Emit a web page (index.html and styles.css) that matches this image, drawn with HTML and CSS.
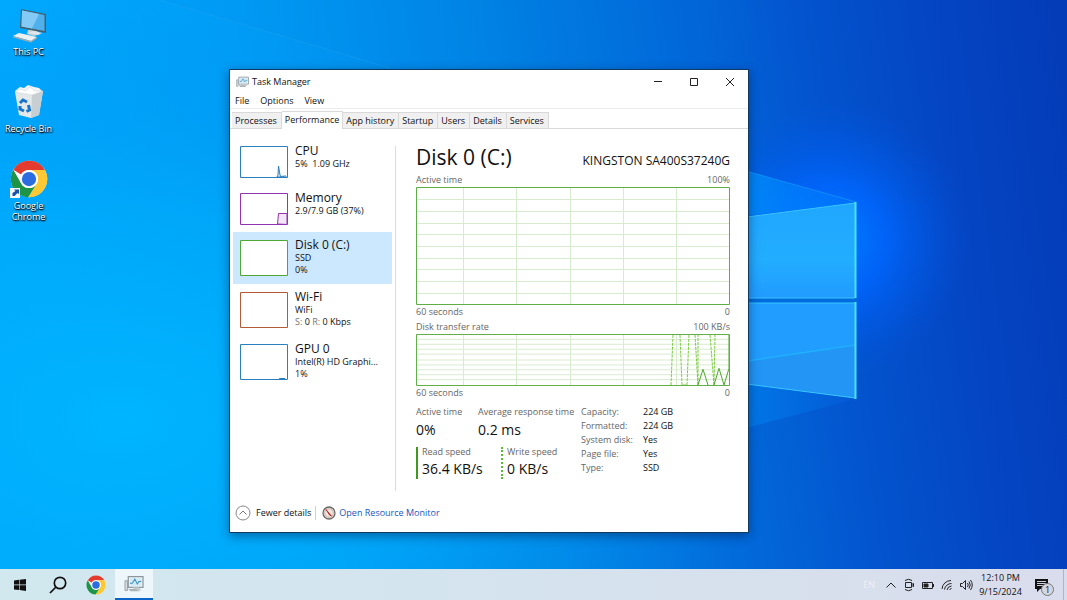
FILE: index.html
```html
<!DOCTYPE html>
<html lang="en">
<head>
<meta charset="utf-8">
<meta name="viewport" content="width=device-width, initial-scale=1">
<title>Task Manager</title>
<link rel="stylesheet" href="styles.css">
</head>
<body>
<svg class="defs" aria-hidden="true">
  <symbol id="chrome" viewBox="0 0 48 48">
    <circle cx="24" cy="24" r="23" fill="#fff"/>
    <path d="M24 1A23 23 0 0 1 44 12.600H24A11.400 11.400 0 0 0 14 18.300L4.200 12.300A23 23 0 0 1 24 1z" fill="#e33b2e"/>
    <path d="M44 12.600A23 23 0 0 1 23 47L33.900 29.700A11.400 11.400 0 0 0 24 12.600z" fill="#fcc934"/>
    <path d="M4.200 12.300L14.100 29.700A11.400 11.400 0 0 0 33.900 29.700L23 47A23 23 0 0 1 4.200 12.300z" fill="#1e9447"/>
    <circle cx="24" cy="24" r="11.500" fill="#fff"/>
    <circle cx="24" cy="24" r="9" fill="#2b6de0"/>
  </symbol>
  <symbol id="taskmgr" viewBox="0 0 24 22">
    <path d="M1 7h3v12H1z" fill="#d8dde0" stroke="#8d979c"/>
    <path d="M5 2h18v13H5z" fill="#e9f4fa" stroke="#8d979c" stroke-width="1.500"/>
    <path d="M7 4h14v9H7z" fill="#d3eaf6"/>
    <path d="M7 10h3l3-5 3 6 2-3h3" fill="none" stroke="#3f94c4" stroke-width="1.300"/>
    <path d="M10 15h8l3 4h-8z" fill="#c3c9cc"/>
    <path d="M5 17h9l5 3H8z" fill="#aab2b6"/>
  </symbol>
</svg>

<main class="desktop">
  <svg class="wallpaper" viewBox="0 0 1067 600" preserveAspectRatio="none" aria-hidden="true">
    <defs>
      <linearGradient id="sky" x1="0" x2="1" y1="0.080" y2="0">
        <stop offset="0" stop-color="#00a9fe"/><stop offset="0.220" stop-color="#009df6"/>
        <stop offset="0.450" stop-color="#0184e5"/><stop offset="0.630" stop-color="#0269da"/>
        <stop offset="0.750" stop-color="#0354ce"/><stop offset="0.870" stop-color="#0445c3"/>
        <stop offset="1" stop-color="#043bb6"/>
      </linearGradient>
      <radialGradient id="low" gradientUnits="userSpaceOnUse" cx="120" cy="420" r="640" gradientTransform="translate(0 147) scale(1 .65)">
        <stop offset="0" stop-color="#00b5ff"/><stop offset="0.500" stop-color="#00aafa" stop-opacity="0.700"/><stop offset="1" stop-color="#0090ee" stop-opacity="0"/>
      </radialGradient>
      <radialGradient id="glow" gradientUnits="userSpaceOnUse" cx="830" cy="240" r="140">
        <stop offset="0" stop-color="#0080ff"/><stop offset="0.400" stop-color="#0066ff" stop-opacity="0.850"/><stop offset="1" stop-color="#0056e0" stop-opacity="0"/>
      </radialGradient>
      <linearGradient id="pane" x1="0" x2="0" y1="0" y2="1">
        <stop offset="0" stop-color="#20a6ff"/><stop offset="0.600" stop-color="#22adff"/><stop offset="1" stop-color="#219bff"/>
      </linearGradient>
      <linearGradient id="beam" x1="0" x2="1"><stop offset="0" stop-color="#0098fc"/><stop offset="1" stop-color="#0084ff" stop-opacity="0.200"/></linearGradient>
    </defs>
    <rect width="1067" height="600" fill="url(#sky)"/>
    <rect width="1067" height="600" fill="url(#low)"/>
    <path d="M160 0L390 68H748V0z" fill="#0077db" opacity="0.060"/>
    <path d="M160 0L390 68" stroke="#22a5f2" stroke-width="1" opacity="0.400"/>
    <circle cx="830" cy="240" r="140" fill="url(#glow)"/>
    <path d="M700 158L856 202 700 222z" fill="url(#beam)"/>
    <path d="M700 158L856 202" stroke="#1aa0ff" opacity="0.600"/>
    <path d="M700 440L856 399 700 378z" fill="url(#beam)" opacity="0.500"/>
    <path d="M700 298H858v5H700z" fill="#006bdc"/>
    <path d="M700 223L855 203V298H700z" fill="url(#pane)"/>
    <path d="M700 303H855V398L700 378z" fill="#219dff"/>
    <path d="M700 368L855 345V398L700 378z" fill="#2295f5"/>
    <path d="M700 368L855 345" stroke="#20b0ff" stroke-width="1.500"/>
    <path d="M700 223L855 203M700 378L855 398M700 298H855M700 303H855" fill="none" stroke="#38c6ff"/>
    <path d="M855.500 202V298M855.500 302V399" stroke="#4ae3ff" stroke-width="2"/>
  </svg>

  <nav class="shortcuts" aria-label="Desktop shortcuts">
    <button class="shortcut">
      <svg width="38" height="38" viewBox="0 0 38 38" aria-hidden="true">
        <path d="M18 24h8l4 4-6 2-7-2z" fill="#c9d2d6"/>
        <path d="M11 3l25 5v19L10 22z" fill="#44606e"/>
        <path d="M12 4.500l22.500 4.500v16L11.500 20.500z" fill="#4fb0ec"/>
        <path d="M12 4.500l17 3.500-7 14.500-10.500-2z" fill="#83cbf6"/>
        <path d="M18 27l6-2 8 2-4 2z" fill="#dfe5e8"/>
        <path d="M3 30l6-3 18 4-6 4z" fill="#edf0f1"/><path d="M3 30v1.500l18 5 6-4V31l-6 4z" fill="#9eabb2"/>
      </svg>
      <span>This PC</span>
    </button>
    <button class="shortcut">
      <svg width="38" height="38" viewBox="0 0 38 38" aria-hidden="true">
        <path d="M5 8l5-4 4 1 4-3 6 2 5 1 4 4-3 4H8z" fill="#f3f5f6"/>
        <path d="M5 9l17 3 11-4-4 24-8 3-12-3z" fill="#e3e8ea"/>
        <path d="M22 12l11-4-4 24-8 3z" fill="#c8cfd3"/>
        <path d="M5 9l6-3 4 2 5-4 5 4 8 0-11 4z" fill="#fff" stroke="#c4ccd0" stroke-width="0.500"/>
        <g fill="none" stroke="#1874c9" stroke-width="3"><path d="M10 20l3-3 4 2"/><path d="M18.500 22l1 5-3 1.500"/><path d="M14 28l-4-2 0-3"/></g>
      </svg>
      <span>Recycle Bin</span>
    </button>
    <button class="shortcut">
      <svg width="38" height="38" viewBox="0 0 38 38" aria-hidden="true">
        <use href="#chrome" width="38" height="38"/>
        <path d="M0 28h10v10H0z" fill="#f4f8fb"/>
        <path d="M2.500 36v-3l3-2-1.500-1.500H9V34l-1.500-1-3 3z" fill="#1753ae"/>
      </svg>
      <span>Google Chrome</span>
    </button>
  </nav>

  <section class="window" aria-label="Task Manager">
    <header class="titlebar">
      <svg width="13" height="12" aria-hidden="true"><use href="#taskmgr"/></svg>
      <h1>Task Manager</h1>
      <div class="controls">
        <button aria-label="Minimize"><svg width="10" height="10"><path d="M1 4.500h8"/></svg></button>
        <button aria-label="Maximize"><svg width="10" height="10"><path d="M1.500 1.500h7v7h-7z"/></svg></button>
        <button aria-label="Close"><svg width="10" height="10"><path d="M1 1l8 8M9 1L1 9"/></svg></button>
      </div>
    </header>
    <nav class="menu" aria-label="Menu"><button>File</button><button>Options</button><button>View</button></nav>
    <div class="tabs" role="tablist">
      <button role="tab">Processes</button><button role="tab" class="active" aria-selected="true">Performance</button><button role="tab">App history</button><button role="tab">Startup</button><button role="tab">Users</button><button role="tab">Details</button><button role="tab">Services</button>
    </div>

    <div class="content">
      <div class="devices">
        <button class="device cpu">
          <svg class="thumb short" viewBox="0 0 48 32"><path class="frame" d="M.5.5h47v31H.5z"/><path d="M37 31l1-2 .5-9 1.500 9 1 2 2-1 1 .5 1-1 1 1V31z" class="area"/></svg>
          <span class="text"><strong>CPU</strong><span>5%&nbsp; 1.09 GHz</span></span>
        </button>
        <button class="device memory">
          <svg class="thumb short" viewBox="0 0 48 32"><path class="frame" d="M.5.5h47v31H.5z"/><path d="M37.500 31l1-10.500H47v11z" class="area"/></svg>
          <span class="text"><strong>Memory</strong><span>2.9/7.9 GB (37%)</span></span>
        </button>
        <button class="device disk selected">
          <svg class="thumb" viewBox="0 0 48 36"><path class="frame" d="M.5.5h47v35H.5z"/></svg>
          <span class="text"><strong>Disk 0 (C:)</strong><span>SSD</span><span>0%</span></span>
        </button>
        <button class="device wifi">
          <svg class="thumb" viewBox="0 0 48 36"><path class="frame" d="M.5.5h47v35H.5z"/></svg>
          <span class="text"><strong>Wi-Fi</strong><span>WiFi</span><span><i>S:</i> 0 <i>R:</i> 0 Kbps</span></span>
        </button>
        <button class="device gpu">
          <svg class="thumb" viewBox="0 0 48 36"><path class="frame" d="M.5.5h47v35H.5z"/><path d="M39 35l2-.500h4v.5z" class="area"/></svg>
          <span class="text"><strong>GPU 0</strong><span>Intel(R) HD Graphi...</span><span>1%</span></span>
        </button>
      </div>

      <div class="detail">
        <div class="heading"><h2>Disk 0 (C:)</h2><span>KINGSTON SA400S37240G</span></div>
        <div class="scale"><span>Active time</span><span>100%</span></div>
        <svg class="chart tall" viewBox="0 0 314 118" preserveAspectRatio="none" role="img" aria-label="Active time">
          <path class="grid" d="M1 12.500h312M1 24.500h312M1 36.500h312M1 47.500h312M1 59.500h312M1 71.500h312M1 82.500h312M1 94.500h312M1 106.500h312"/>
          <path class="grid" d="M47.500 1v116M100.500 1v116M154.500 1v116M207.500 1v116M260.500 1v116"/>
          <path class="border" d="M.5.500h313v117H.5z"/>
        </svg>
        <div class="scale"><span>60 seconds</span><span>0</span></div>
        <div class="scale last"><span>Disk transfer rate</span><span>100 KB/s</span></div>
        <svg class="chart low" viewBox="0 0 314 53" preserveAspectRatio="none" role="img" aria-label="Disk transfer rate">
          <path class="grid" d="M1 5.500h312M1 10.500h312M1 15.500h312M1 20.500h312M1 26.500h312M1 31.500h312M1 36.500h312M1 41.500h312M1 46.500h312"/>
          <path class="grid" d="M47.500 1v51M100.500 1v51M154.500 1v51M207.500 1v51M260.500 1v51"/>
          <path class="write" d="M255 52L257 1M264 1l2 51h5l2-51M279 1l3 51 0-51M294 1l4 51 1-51"/>
          <path class="read" d="M282 52l5-16 5 16M298 52l5-17 5 17 5-17V1"/>
          <path class="border" d="M.5.500h313v52H.5z"/>
        </svg>
        <div class="scale"><span>60 seconds</span><span>0</span></div>

        <div class="figures">
          <div class="speeds">
            <dl class="pair"><div><dt>Active time</dt><dd>0%</dd></div><div><dt>Average response time</dt><dd>0.2 ms</dd></div></dl>
            <dl class="pair rates"><div class="solid"><dt>Read speed</dt><dd>36.4 KB/s</dd></div><div class="dashed"><dt>Write speed</dt><dd>0 KB/s</dd></div></dl>
          </div>
          <dl class="facts">
            <dt>Capacity:</dt><dd>224 GB</dd><dt>Formatted:</dt><dd>224 GB</dd><dt>System disk:</dt><dd>Yes</dd><dt>Page file:</dt><dd>Yes</dd><dt>Type:</dt><dd>SSD</dd>
          </dl>
        </div>
      </div>
    </div>

    <footer class="statusbar">
      <button><svg width="16" height="16" viewBox="0 0 16 16" fill="none" aria-hidden="true"><circle cx="8" cy="8" r="7" stroke="#888"/><path d="M4.500 9.500L8 6l3.500 3.500" stroke="#777"/></svg>Fewer details</button>
      <a href="#monitor"><svg width="14" height="14" viewBox="0 0 14 14" aria-hidden="true"><circle cx="7" cy="7" r="6" fill="#eee5df" stroke="#6d6868" stroke-width="1.300"/><circle cx="7" cy="7" r="4.300" fill="none" stroke="#c9b6ae"/><path d="M4 3.500l5.500 6.500-2-1z" fill="#b52320" stroke="#b52320" stroke-width="0.700"/></svg>Open Resource Monitor</a>
    </footer>
  </section>
</main>

<footer class="taskbar">
  <nav class="apps" aria-label="Taskbar">
    <button aria-label="Start"><svg width="14" height="14" viewBox="0 0 14 14"><path d="M1 2.500l5-.700v4.800H1zM6.600 1.700L13 .9v5.700H6.600zM1 7.300h5v4.800l-5-.700zM6.600 7.300H13V13l-6.400-.9z" fill="#111"/></svg></button>
    <button aria-label="Search"><svg width="18" height="18" viewBox="0 0 18 18" fill="none" stroke="#111" stroke-width="1.700"><circle cx="11" cy="7" r="5.700"/><path d="M7 11L1 17"/></svg></button>
    <button aria-label="Google Chrome"><svg width="20" height="20"><use href="#chrome"/></svg></button>
    <button class="running" aria-label="Task Manager"><svg width="20" height="18"><use href="#taskmgr"/></svg></button>
  </nav>
  <div class="tray">
    <span class="language">EN</span>
    <button aria-label="Show hidden icons"><svg width="12" height="12"><path d="M1.500 8.500L6 4l4.500 4.500"/></svg></button>
    <button aria-label="Meet now"><svg width="12" height="14"><path d="M2.500 4.500h6v5h-6zM8.500 6.500l2-1v3l-2-1M2 2.500Q5.500 0 9 2.500M2 11.500q3.500 2.500 7 0"/></svg></button>
    <button aria-label="Battery"><svg width="14" height="12"><path d="M1.500 3.500h10v6h-10zM12.500 5v3"/><path d="M3 5h4v3H3z" fill="#222"/></svg></button>
    <button aria-label="Network"><svg width="12" height="12"><path d="M1 10A9 9 0 0 1 10 1.500M3.500 10.500A7 7 0 0 1 10.500 4.500M6 11a5 5 0 0 1 4.500-4M8.500 11l2-2"/></svg></button>
    <button aria-label="Volume"><svg width="14" height="12"><path d="M1.500 4.500h2l3-3v9l-3-3h-2zM8.500 4q1.500 2 0 4M10 2.500q2.500 3.500 0 7M11.500 1q3.500 5 0 10"/></svg></button>
    <time class="clock" datetime="2024-09-15T12:10"><span>12:10 PM</span><span>9/15/2024</span></time>
    <button class="notes" aria-label="1 notification"><svg width="15" height="14" viewBox="0 0 15 14"><path d="M1 1h13v10H6l-3 3v-3H1z" fill="#111" stroke="none"/><path d="M3 3.500h9M3 5.500h9M3 7.500h6" stroke="#c9cfd8"/></svg><span class="badge">1</span></button>
  </div>
</footer>
</body>
</html>
```
FILE: styles.css
```css
* { box-sizing: border-box; }
body {
  margin: 0;
  min-height: 100vh;
  display: flex;
  flex-direction: column;
  font: 9px/12px "Open Sans", "Noto Sans", sans-serif;
  color: #111;
  background: #0588e8;
}
button { margin: 0; padding: 0; border: 0; background: none; font: inherit; color: inherit; }
h1, h2, dl, dd { margin: 0; font-weight: 400; }
svg { display: block; flex: none; }
.defs { position: absolute; width: 0; height: 0; }

.desktop { flex: 1; position: relative; display: flex; }
.wallpaper { position: absolute; top: 0; left: 0; width: 100%; height: 100vh; }

.shortcuts { position: relative; display: flex; flex-direction: column; gap: 26px; padding: 6px 0; width: 57px; }
.shortcut { display: flex; flex-direction: column; align-items: center; gap: 2px; line-height: 11px; color: #fff; text-shadow: 0 1px 1px #000, 1px 1px 2px #000; }

.window {
  position: absolute;
  left: 229px;
  top: 69px;
  width: 520px;
  background: #fff;
  border: 1px solid #0d3b66;
  box-shadow: 0 3px 10px rgba(0, 20, 60, 0.450);
}
.titlebar { display: flex; align-items: center; gap: 3px; height: 24px; padding-left: 6px; }
.titlebar h1 { font-size: 9px; }
.controls { display: flex; margin-left: auto; }
.controls button { width: 36px; height: 24px; display: grid; place-items: center; }
.controls svg { fill: none; stroke: #222; }
.menu { display: flex; gap: 11px; padding: 1px 5px; height: 15px; border-bottom: 1px solid #ececec; }
.tabs { display: flex; align-items: flex-end; height: 20px; padding-left: 2px; border-bottom: 1px solid #d9d9d9; }
.tabs button { height: 16px; padding: 0 4px 0 3px; background: #f0f0f0; border: 1px solid #d9d9d9; border-width: 1px 1px 0 0; }
.tabs .active { height: 18px; margin-bottom: -1px; padding: 0 3px 2px; background: #fff; }

.content { display: flex; padding: 9px 18px 0 3px; }
.devices { width: 159px; flex: none; }
.device { display: flex; width: 100%; gap: 7px; padding: 6px 6px 8px 7px; text-align: left; }
.device.cpu, .device.memory { padding-bottom: 7px; }
.device .text, .device .text > * { display: block; white-space: nowrap; }
.device strong { font-weight: 400; font-size: 12px; line-height: 14px; }
.device i { font-style: normal; color: #777; }
.selected { background: #cce8ff; }
.thumb { width: 48px; height: 36px; margin-top: 2px; }
.thumb.short { height: 32px; }
.frame { fill: #fff; stroke: currentColor; }
.area { fill: currentColor; fill-opacity: 0.120; stroke: currentColor; }
.cpu .thumb, .gpu .thumb { color: #2a7fbf; }
.memory .thumb { color: #9333b2; }
.disk .thumb { color: #4fa832; }
.wifi .thumb { color: #b35a36; }

.detail { flex: 1; margin: 8px 0 0 3px; padding-left: 20px; border-left: 1px solid #dcdcdc; min-height: 345px; }
.heading { display: flex; justify-content: space-between; align-items: baseline; height: 28px; line-height: 22px; font-size: 12px; }
.heading h2 { font-size: 21px; }
.scale { display: flex; justify-content: space-between; color: #666; height: 15px; line-height: 14px; }
.heading + .scale { height: 13px; line-height: 12px; }
.scale.last { height: 14px; }
.chart { width: 100%; }
.tall { height: 118px; }
.low { height: 52px; }
.grid { fill: none; stroke: #d9ebcf; }
.border { fill: none; stroke: #5fae45; }
.read { fill: none; stroke: #4ea62c; }
.write { fill: none; stroke: #78c93d; stroke-dasharray: 3 1; }

.figures { display: flex; margin-top: 5px; }
.speeds { width: 165px; }
.pair { display: grid; grid-template-columns: 62px auto; white-space: nowrap; }
.pair dt { color: #666; }
.pair dd { font-size: 14px; line-height: 24px; }
.rates { grid-template-columns: 85px auto; margin-top: 5px; }
.rates > div { height: 32px; padding-left: 4px; border-left: 2px solid #3f9b1e; line-height: 10px; }
.rates > .dashed { border-left-style: dotted; border-left-color: #5bbb33; }
.facts { display: grid; grid-template-columns: 62px auto; grid-auto-rows: 14px; align-content: start; }
.facts dt { color: #666; }

.statusbar { display: flex; align-items: center; height: 41px; padding: 2px 5px 0; }
.statusbar button, .statusbar a { display: flex; align-items: center; gap: 5px; }
.statusbar a { margin-left: 4px; padding-left: 6px; gap: 3px; color: #1756c4; text-decoration: none; border-left: 1px solid #d0d0d0; }

.taskbar { position: relative; display: flex; justify-content: space-between; height: 31px; background: linear-gradient(90deg, #d1e8ef, #d5e3ee 50%, #d9dcec); }
.apps, .tray { display: flex; align-items: center; }
.apps button { display: grid; place-items: center; width: 38px; height: 31px; }
.apps { padding-left: 1px; }
.apps .running { background: #edf6fa; border-bottom: 2px solid #0b66c9; }
.tray { gap: 6px; padding-right: 9px; border-right: 1px solid #aeb6c4; margin-right: 3px; }
.tray svg { fill: none; stroke: #222; }
.language { color: #eef1f7; margin-right: 4px; }
.clock { display: flex; flex-direction: column; align-items: center; line-height: 14px; width: 43px; }
.notes { position: relative; margin-left: 6px; padding-right: 5px; }
.badge { position: absolute; right: 0; top: 5px; width: 13px; height: 13px; border: 1px solid #777; border-radius: 50%; background: #d3d6df; line-height: 11px; }
```
